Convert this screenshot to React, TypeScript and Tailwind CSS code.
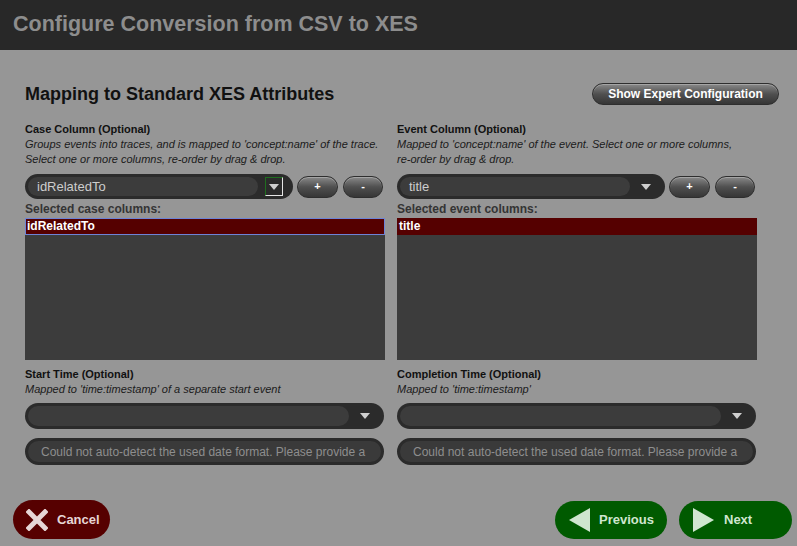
import React from 'react';

const font = { fontFamily: '"Liberation Sans", Arial, sans-serif' };

const Arrow = () => (
  <svg width="10" height="6" viewBox="0 0 10 6">
    <path d="M0 0 L10 0 L5 6 Z" fill="#cfcfcf" />
  </svg>
);

const PillButton = ({ label, className }: { label: string; className: string }) => (
  <button
    className={`rounded-full border border-[#2e2e2e] bg-gradient-to-b from-[#8a8a8a] via-[#505050] to-[#363636] text-white font-bold shadow-[inset_0_1px_0_rgba(255,255,255,0.25)] ${className}`}
  >
    {label}
  </button>
);

const Combo = ({ value, focused, width }: { value?: string; focused?: boolean; width: string }) => (
  <div className={`flex h-full items-center rounded-full bg-[#2b2b2b] p-[3px] ${width}`}>
    <div className="flex h-full flex-1 items-center rounded-full bg-[#3c3c3c] pl-[9px] text-[13px] text-[#cdcdcd]">
      {value}
    </div>
    <div className="flex w-[32px] items-center justify-center">
      {focused ? (
        <div className="flex h-[19px] w-[18px] items-center justify-center border border-l-[#1f6e1f] border-t-[#1f6e1f] border-r-[#e6e6e6] border-b-[#e6e6e6]">
          <Arrow />
        </div>
      ) : (
        <Arrow />
      )}
    </div>
  </div>
);

const DateInput = () => (
  <div className="flex h-[27px] w-[359px] items-center rounded-full border-[3px] border-[#2b2b2b] bg-[#3a3a3a] pl-[13px] text-[12px] text-[#8e8e8e] whitespace-nowrap overflow-hidden">
    Could not auto-detect the used date format. Please provide a
  </div>
);

type ColumnProps = {
  title: string;
  desc: React.ReactNode;
  value: string;
  focused?: boolean;
  listLabel: string;
  timeTitle: string;
  timeDesc: string;
};

const Column = ({ title, desc, value, focused, listLabel, timeTitle, timeDesc }: ColumnProps) => (
  <div className="flex w-[360px] flex-col">
    <div className="text-[11px] font-bold leading-[15px] text-[#111]">{title}</div>
    <div className="text-[11px] italic leading-[15px] text-[#1b1b1b]">{desc}</div>

    <div className="mt-[7px] flex h-[25px] items-center">
      <Combo value={value} focused={focused} width="w-[268px]" />
      <PillButton label="+" className="ml-[4px] h-[22px] w-[41px] text-[11px]" />
      <PillButton label="-" className="ml-[5px] h-[22px] w-[40px] text-[11px]" />
    </div>

    <div className="h-[19px] pt-[3px] text-[12px] font-bold leading-[15px] text-[#343434]">{listLabel}</div>
    <div className="h-[142px] bg-[#3c3c3c]">
      <div
        className={`h-[17px] bg-[#550000] text-[12px] font-bold leading-[15px] text-white ${
          focused ? 'border border-[#6d83d6] pl-px' : 'pl-[2px] pt-px'
        }`}
      >
        {value}
      </div>
    </div>

    <div className="mt-[7px] text-[11px] font-bold leading-[15px] text-[#111]">{timeTitle}</div>
    <div className="text-[11px] italic leading-[15px] text-[#1b1b1b]">{timeDesc}</div>
    <div className="mt-[6px] h-[26px]">
      <Combo width="w-[359px]" />
    </div>
    <div className="mt-[9px]">
      <DateInput />
    </div>
  </div>
);

const App = () => {
  return (
    <div className="h-[546px] w-[797px] overflow-hidden bg-[#969696]" style={font}>
      <div className="flex h-[50px] items-center bg-[#282828] pl-[13px] pb-[2px]">
        <h1 className="text-[21.5px] font-bold text-[#8d8d8d]">Configure Conversion from CSV to XES</h1>
      </div>

      <div className="pl-[25px]">
        <div className="mt-[32px] flex h-[24px] w-[754px] items-center justify-between">
          <h2 className="text-[18px] font-bold text-[#111]">Mapping to Standard XES Attributes</h2>
          <PillButton label="Show Expert Configuration" className="h-[22px] w-[187px] text-[12px]" />
        </div>

        <div className="mt-[16px] flex gap-[12px]">
          <Column
            title="Case Column (Optional)"
            desc={
              <>
                Groups events into traces, and is mapped to 'concept:name' of the trace.
                <br />
                Select one or more columns, re-order by drag &amp; drop.
              </>
            }
            value="idRelatedTo"
            focused
            listLabel="Selected case columns:"
            timeTitle="Start Time (Optional)"
            timeDesc="Mapped to 'time:timestamp' of a separate start event"
          />
          <Column
            title="Event Column (Optional)"
            desc={
              <>
                Mapped to 'concept:name' of the event. Select one or more columns,
                <br />
                re-order by drag &amp; drop.
              </>
            }
            value="title"
            listLabel="Selected event columns:"
            timeTitle="Completion Time (Optional)"
            timeDesc="Mapped to 'time:timestamp'"
          />
        </div>
      </div>

      <div className="mt-[35px] flex items-center justify-between pl-[13px] pr-[5px]">
        <button className="flex h-[39px] w-[97px] items-center rounded-full bg-[#560000] pl-[13px] text-[13px] font-bold text-[#e6d6d6]">
          <svg width="22" height="22" viewBox="0 0 22 22" className="mr-[9px]">
            <path d="M3 3 L19 19 M19 3 L3 19" stroke="#e6d6d6" strokeWidth="5" strokeLinecap="square" />
          </svg>
          Cancel
        </button>

        <div className="flex gap-[12px]">
          <button className="flex h-[38px] w-[112px] items-center rounded-full bg-[#005a00] pl-[14px] text-[13px] font-bold text-[#cfe6cf]">
            <svg width="21" height="24" viewBox="0 0 21 24" className="mr-[9px]">
              <path d="M21 0 L21 24 L0 12 Z" fill="#cfe6cf" />
            </svg>
            Previous
          </button>
          <button className="flex h-[38px] w-[113px] items-center rounded-full bg-[#005a00] pl-[14px] text-[13px] font-bold text-[#cfe6cf]">
            <svg width="21" height="24" viewBox="0 0 21 24" className="mr-[10px]">
              <path d="M0 0 L0 24 L21 12 Z" fill="#cfe6cf" />
            </svg>
            Next
          </button>
        </div>
      </div>
    </div>
  );
};

export default App;
